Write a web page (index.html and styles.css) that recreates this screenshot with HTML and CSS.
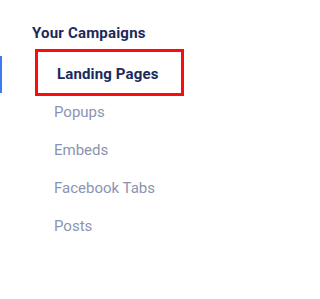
FILE: index.html
```html
<!DOCTYPE html>
<html lang="en">
<head>
<meta charset="utf-8">
<title>Your Campaigns</title>
<link rel="stylesheet" href="styles.css">
</head>
<body>
<nav class="sidebar">
  <h2 class="sidebar-title">Your Campaigns</h2>
  <ul class="menu">
    <li class="menu-item is-active"><a href="#">Landing Pages</a></li>
    <li class="menu-item"><a href="#">Popups</a></li>
    <li class="menu-item"><a href="#">Embeds</a></li>
    <li class="menu-item"><a href="#">Facebook Tabs</a></li>
    <li class="menu-item"><a href="#">Posts</a></li>
  </ul>
</nav>
</body>
</html>
```

FILE: styles.css
```css
html, body {
  margin: 0;
  padding: 0;
  background: #ffffff;
}

body {
  font-family: Roboto, "Liberation Sans", Arial, sans-serif;
  width: 300px;
  height: 299px;
  overflow: hidden;
}

.sidebar {
  padding-top: 23px;
}

.sidebar-title {
  margin: 0 0 12px 32px;
  font-size: 15px;
  line-height: 20px;
  font-weight: 700;
  letter-spacing: 0.2px;
  color: #1b2a5b;
}

.menu {
  list-style: none;
  margin: 0;
  padding: 0;
}

.menu-item {
  position: relative;
  height: 38px;
  line-height: 38px;
  padding-left: 54px;
  font-size: 15px;
}

.menu-item a {
  text-decoration: none;
  color: #8a94b2;
}

.menu-item.is-active {
  padding-left: 57px;
}

.menu-item.is-active a {
  color: #1b2a5b;
  font-weight: 700;
  letter-spacing: 0.15px;
}

.menu-item.is-active::before {
  content: "";
  position: absolute;
  left: 0;
  top: 1px;
  width: 2px;
  height: 37px;
  background: #3d7bf4;
}

.menu-item.is-active::after {
  content: "";
  position: absolute;
  left: 35px;
  top: -6px;
  width: 149px;
  height: 47px;
  box-sizing: border-box;
  border: 3px solid #ff0a0a;
}
```
